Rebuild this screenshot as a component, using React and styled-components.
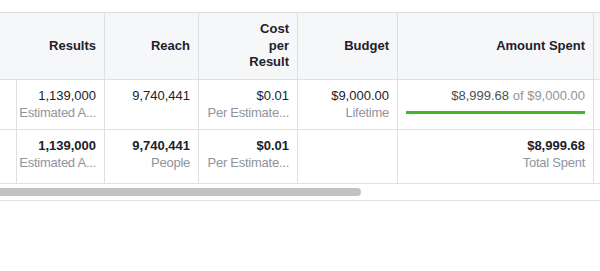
import React from "react";
import styled, { createGlobalStyle } from "styled-components";

const GlobalStyle = createGlobalStyle`
  html, body {
    margin: 0;
    padding: 0;
    background: #ffffff;
  }
  body {
    font-family: "Liberation Sans", Arial, Helvetica, sans-serif;
    font-size: 13px;
    color: #1d2129;
  }
`;

const BORDER = "#dddfe2";

const Page = styled.div`
  padding-top: 12px;
  width: 600px;
  overflow: hidden;
`;

const Table = styled.div`
  display: grid;
  grid-template-columns: 9px 96px 94px 99px 100px 196px 1fr;
  border-top: 1px solid ${BORDER};
  line-height: 16.6px;
`;

const HeaderCell = styled.div`
  box-sizing: border-box;
  height: 67px;
  display: flex;
  align-items: center;
  justify-content: flex-end;
  padding: 0 8px;
  background: #f6f7f9;
  border-right: ${(p) => (p.$last ? "none" : `1px solid ${BORDER}`)};
  border-bottom: 1px solid ${BORDER};
  font-weight: bold;
  text-align: right;
  color: #1d2129;
`;

const Cell = styled.div`
  box-sizing: border-box;
  min-width: 0;
  padding: 8px 8px ${(p) => (p.$footer ? "12px" : "8px")};
  border-right: ${(p) => (p.$last ? "none" : `1px solid ${BORDER}`)};
  border-bottom: 1px solid ${BORDER};
  text-align: right;
`;

const Value = styled.div`
  font-weight: ${(p) => (p.$bold ? "bold" : "normal")};
  color: #1d2129;
  white-space: nowrap;
`;

const Sub = styled.div`
  color: #90949c;
  white-space: nowrap;
  letter-spacing: -0.25px;
`;

const Spent = styled.span`
  color: #4b4f56;
`;

const Of = styled.span`
  color: #90949c;
`;

const ProgressBar = styled.div`
  height: 3px;
  margin-top: 6px;
  background: #42b72a;
`;

const ScrollTrack = styled.div`
  box-sizing: border-box;
  height: 17px;
  padding-top: 4px;
  border-bottom: 1px solid ${BORDER};
`;

const ScrollThumb = styled.div`
  width: 361px;
  height: 8px;
  background: #c1c1c1;
  border-radius: 0 4px 4px 0;
`;

const columns = ["", "Results", "Reach", "Cost per Result", "Budget", "Amount Spent", ""];

export default function App() {
  return (
    <>
      <GlobalStyle />
      <Page>
        <Table>
          {columns.map((c, i) => (
            <HeaderCell key={i} $last={i === columns.length - 1}>
              {c === "Cost per Result" ? (
                <span>
                  Cost
                  <br />
                  per
                  <br />
                  Result
                </span>
              ) : (
                c
              )}
            </HeaderCell>
          ))}

          <Cell />
          <Cell>
            <Value>1,139,000</Value>
            <Sub>Estimated A...</Sub>
          </Cell>
          <Cell>
            <Value>9,740,441</Value>
          </Cell>
          <Cell>
            <Value>$0.01</Value>
            <Sub>Per Estimate...</Sub>
          </Cell>
          <Cell>
            <Value>$9,000.00</Value>
            <Sub>Lifetime</Sub>
          </Cell>
          <Cell>
            <Value>
              <Spent>$8,999.68</Spent> <Of>of $9,000.00</Of>
            </Value>
            <ProgressBar />
          </Cell>
          <Cell $last />

          <Cell $footer />
          <Cell $footer>
            <Value $bold>1,139,000</Value>
            <Sub>Estimated A...</Sub>
          </Cell>
          <Cell $footer>
            <Value $bold>9,740,441</Value>
            <Sub>People</Sub>
          </Cell>
          <Cell $footer>
            <Value $bold>$0.01</Value>
            <Sub>Per Estimate...</Sub>
          </Cell>
          <Cell $footer />
          <Cell $footer>
            <Value $bold>$8,999.68</Value>
            <Sub>Total Spent</Sub>
          </Cell>
          <Cell $footer $last />
        </Table>
        <ScrollTrack>
          <ScrollThumb />
        </ScrollTrack>
      </Page>
    </>
  );
}
